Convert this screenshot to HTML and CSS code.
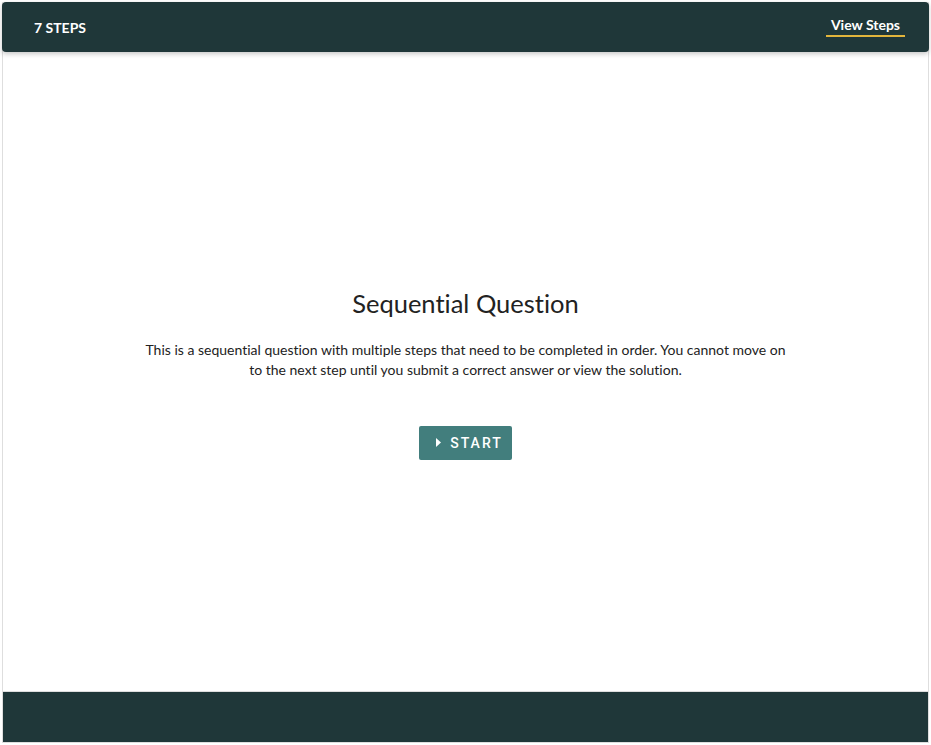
FILE: index.html
```html
<!DOCTYPE html>
<html lang="en">
  <head>
    <meta charset="UTF-8" />
    <meta name="viewport" content="width=device-width, initial-scale=1.0" />
    <title>Sequential Question</title>
    <link rel="stylesheet" href="styles.css">
  </head>
  <body>
    <div class="question">
      <div class="question-head">
        <span class="steps-count">7 STEPS</span>
        <a class="view-steps" href="#steps">View Steps</a>
      </div>
      <div class="question-body">
        <h1 class="title">Sequential Question</h1>
        <p class="intro">This is a sequential question with multiple steps that need to be completed in order. You cannot move on to the next step until you submit a correct answer or view the solution.</p>
        <button class="start-btn">
          <svg class="play" width="5" height="9" viewBox="0 0 5 9"><path d="M0 0 L5 4.5 L0 9 Z" fill="#fff"/></svg>
          START
        </button>
      </div>
      <div class="question-foot"></div>
    </div>
  </body>
</html>
```

FILE: styles.css
```css
* {
  margin: 0;
  padding: 0;
  box-sizing: border-box;
}
body {
  font-family: Lato, "Open Sans", sans-serif;
  font-variant-ligatures: none;
  color: #222;
  background: #fff;
}
.question {
  margin: 2px;
  width: 927px;
  height: 741px;
  border: 1px solid #dedede;
  border-top: none;
  display: flex;
  flex-direction: column;
}
.question-head {
  height: 50px;
  margin: 0 -1px;
  background-color: #1f3739;
  border-radius: 4px;
  box-shadow: 0 2px 5px rgba(0, 0, 0, 0.22);
  display: flex;
  align-items: center;
  justify-content: space-between;
  padding: 0 24px 0 32px;
  position: relative;
  z-index: 1;
}
.steps-count {
  color: #fff;
  font-size: 14px;
  font-weight: 700;
  margin-top: 1px;
}
.view-steps {
  color: #fff;
  font-size: 14px;
  font-weight: 700;
  text-decoration: none;
  padding: 0 5px 2px;
  border-bottom: 2px solid #e2b53c;
  margin-top: -1px;
}
.question-body {
  flex: 1;
  display: flex;
  flex-direction: column;
  align-items: center;
  justify-content: center;
  text-align: center;
  padding-top: 4px;
}
.title {
  font-size: 25.5px;
  font-weight: 400;
  line-height: 30px;
  color: #222;
}
.intro {
  width: 652px;
  font-size: 14px;
  line-height: 20px;
  margin-top: 22px;
}
.start-btn {
  margin-top: 46px;
  width: 93px;
  height: 34px;
  background-color: #427e7d;
  color: #fff;
  border: none;
  border-radius: 2px;
  font-family: Roboto, sans-serif;
  font-size: 14px;
  font-weight: 500;
  letter-spacing: 2px;
  display: flex;
  align-items: center;
  justify-content: center;
  gap: 9px;
  padding-left: 8px;
  cursor: pointer;
}
.play {
  display: block;
}
.question-foot {
  height: 51px;
  background-color: #1f3739;
  border-top: 1px solid #dedede;
}
```
